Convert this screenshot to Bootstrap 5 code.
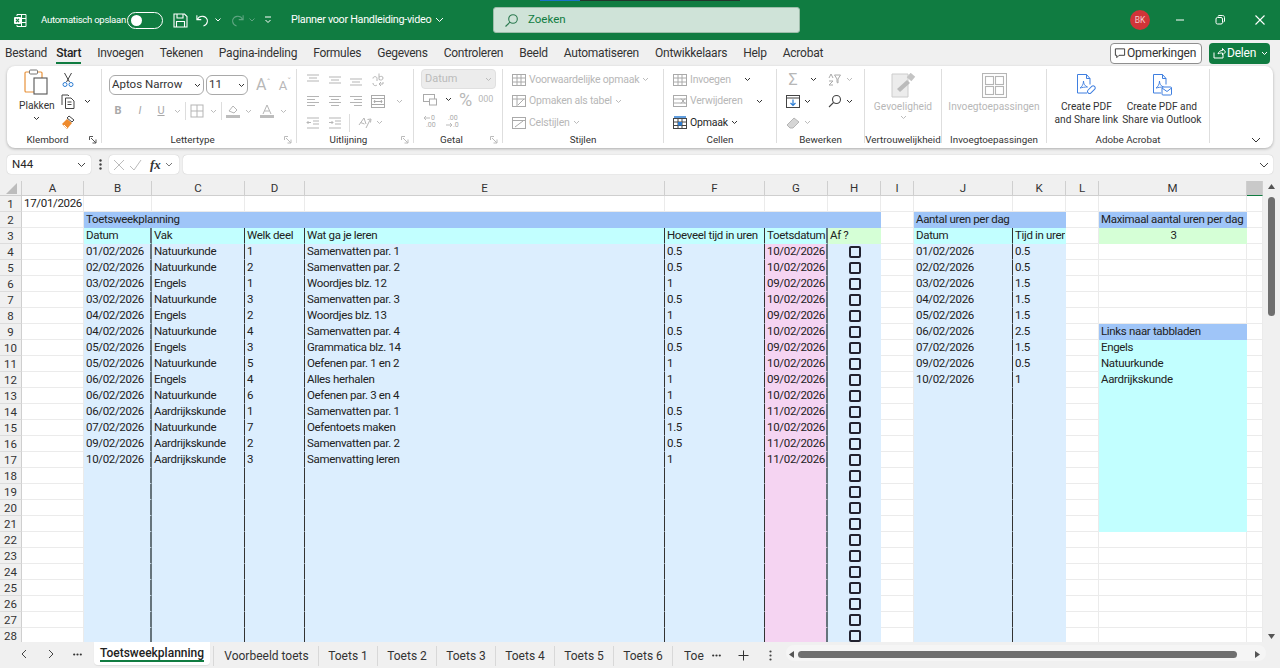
<!DOCTYPE html>
<html lang="nl"><head><meta charset="utf-8"><title>Planner voor Handleiding-video - Excel</title>
<link href="https://cdn.jsdelivr.net/npm/bootstrap@5.3.0/dist/css/bootstrap.min.css" rel="stylesheet">
<style>
:root{--xg:#107c41;--dis:#bdbdbd;--ink:#333;--rib:"Roboto","Open Sans",sans-serif}
html,body{height:668px;overflow:hidden}
body{background:#f0f0f0;font-family:var(--rib);color:#262626}
.app{width:1280px;height:668px}
svg{display:block;flex:none}
.titlebar{height:40px;background:var(--xg);color:#fff;font-size:11px;position:relative}
.topline{position:absolute;left:540px;top:0;width:200px;height:1px;background:linear-gradient(90deg,#1a73c8 20%,#24342c 20%)}
.xlogo{margin-left:13px;margin-right:14px}
.autolbl{width:86px;font-size:9.6px;letter-spacing:-.3px;white-space:nowrap}
.tog{width:36px;height:17px;border:1.3px solid #fff;border-radius:9px;padding:2px 3px;margin-right:10px}
.tog i{display:block;width:11px;height:11px;border-radius:50%;background:#fff}
.qat{width:102px}
.doc{width:202px;font-size:10.8px;letter-spacing:-.3px;white-space:nowrap}
.search{width:307px;height:26px;background:#cfe3d8;border:1px solid #9dbdaa;border-radius:3px;color:#107c41;font-size:11.5px;padding-left:10px;gap:9px}
.avatar{width:20px;height:20px;border-radius:50%;background:#d13438;font-size:8.5px;margin-left:330px;color:#f6c9cb}
.wins{gap:24px;margin-left:22px}
.menubar{height:26px;padding:0 10px 0 5px;position:relative}
.mitem{font-size:12px;letter-spacing:-.25px;color:#333;margin-right:16px;line-height:26px;white-space:nowrap;position:relative}
.mitem.first{margin-right:9px}
.mitem.on{font-weight:500;color:#222}
.mitem.on::after{content:"";position:absolute;left:0;right:0;bottom:2px;height:2px;background:var(--xg)}
.btn-comment{width:92px;height:21px;border:1px solid #8f8f8f;border-radius:4px;background:#fff;font-size:12px;letter-spacing:-.2px;gap:1px;padding:0 0 0 3px;color:#333}
.btn-share{width:61px;height:21px;border-radius:4px;background:var(--xg);color:#fff;font-size:12px;letter-spacing:-.2px;margin-left:7px;gap:1px;padding:0 0 0 4px}
.ribbon{margin:0 7px;height:82px;background:#fff;border-radius:8px;box-shadow:0 1px 3px rgba(0,0,0,.28);padding:3px 0 5px}
.grp{height:100%;border-right:1px solid #dedede;flex:none;position:relative}
.grplbl{position:absolute;left:0;right:0;bottom:-3px;text-align:center;font-size:9.8px;color:#333;line-height:12px}
.grplbl.kl{right:13px}
.launch{position:absolute;right:4px;bottom:-1px}
.w1{width:95px}.w2{width:195px}.w3{width:117px}.w4{width:89px}.w5{width:161px}.w6{width:113px}.w7{width:88px}.w8{width:77px}.w9{width:105px}.w10{width:163px}
.bigcol{font-size:10.2px;text-align:center;line-height:13px;color:#333}
.dimt{color:#b7b7b7}
.rrow{height:21.5px}
.ib{width:21.5px;flex:none}
.bx{display:flex;justify-content:center;align-items:center;flex:none}
.b4{width:4px}.b10{width:10px}.b12{width:12px}.b14{width:14px}.b16{width:16px}.b18{width:18px}.b20{width:20px}.b22{width:22px}.b24{width:24px}.b27{width:27px}.b30{width:30px}
.vsep{width:1px;height:18px;background:#ddd}
.fsel{height:20px;border:1px solid #a9a9a9;border-radius:6px;font-size:11.5px;padding:0 2px;color:#333}
.fsel.a{width:95px}.fsel.b{width:42px;margin-left:2px}
.fontrow{padding-left:7px;margin-top:6px}
.fmtrow{padding-left:5px;margin-top:7px;font-size:11px;color:#a8a8a8}
.bigA{font-size:16px;line-height:1}.smA{font-size:13px;line-height:1}
.supa{font-size:9px;top:-.5em}
.numsel{width:75px;height:20px;background:#ececec;border:1px solid #e0e0e0;border-radius:4px;font-size:11px;color:#bbb;padding:0 3px;margin:0 0 0 7px}
.stl{font-size:10.5px;letter-spacing:-.22px;white-space:nowrap;gap:3px;height:21.5px}
.stack{padding-left:9px}
.ps9{padding-left:9px}
.col2{margin-left:6px}
.cw1{width:51px}.cw2{width:63px}
.pctbig{font-size:18px;line-height:1;margin-left:7px}
.pct{font-size:9px;margin-left:6px}
.tinynum{font-size:7px;fill:#aaa;font-family:"Roboto",sans-serif}
.gv{margin-top:2px}
.getrow{padding-left:9px}
.fbar{height:33px;padding:7px}
.fbx{height:19px;background:#fff;border-radius:4px;box-shadow:0 0 1px rgba(0,0,0,.3);font-size:11.5px}
.namebox{width:84px;padding:0 5px}
.vdots{width:18px}
.fxbox{width:70px;padding:0 3px 0 4px}
.fxinp{margin-left:4px;flex:1;padding-right:2px}
.fx{font-family:"Liberation Serif",serif;font-style:italic;font-weight:700;font-size:13px;color:#333}
.sheetwrap{height:461px;position:relative;background:#fff}
.gridbox{width:1263px;height:461px;overflow:hidden}
.sheet{table-layout:fixed;width:1263px;border-collapse:separate;border-spacing:0;font-family:"Roboto",sans-serif;font-size:11.5px;letter-spacing:-.33px;color:#222}
.sheet th{height:15px;background:#f0f0f0;text-align:center;font-weight:400;font-size:11.5px;letter-spacing:0;line-height:14px;border-right:1px solid #cfcfcf;border-bottom:1px solid #cfcfcf;padding:0;color:#333}
.sheet th.rh{background:#f0f0f0;border-right:1px solid #cfcfcf;border-bottom:1px solid #dcdcdc;height:16px}
.sheet td{height:16px;padding:0 0 0 2px;line-height:15px;white-space:nowrap;overflow:hidden;border-right:1px solid #ebebeb;border-bottom:1px solid #ebebeb}
.sheet .corner{background:#f0f0f0}
.sheet th.sel{background:#c9c9c9;border-bottom:1px solid var(--xg)}
.fb{background:#dceefe!important;border-right-color:#dceefe!important;border-bottom-color:#dceefe!important}
.fp{background:#f5d4f2!important;border-right-color:#f5d4f2!important;border-bottom-color:#f5d4f2!important}
.fh{background:#9fc5f8!important;border-right-color:#9fc5f8!important;border-bottom-color:#9fc5f8!important}
.fc{background:#c2ffff!important;border-right-color:#c2ffff!important;border-bottom-color:#c2ffff!important}
.fg{background:#d5ffd6!important;border-right-color:#d5ffd6!important;border-bottom-color:#d5ffd6!important}
.l1{border-right:1px solid #333!important}
.l2{border-right:2px solid #66747c!important}
.sheet td.ra{text-align:right;padding-right:1px}.ca{text-align:center}
.cbx{display:block;width:12px;height:12px;border:2px solid #222230;border-radius:2px;margin:0 auto}
.vscroll{width:17px;height:461px;background:#f0f0f0;position:absolute;right:0;top:0}
.vthumb{position:absolute;left:5px;top:16px;width:7px;height:119px;background:#6f6f6f;border-radius:4px}
.varr{position:absolute;left:4px;top:2px}
.varr.dn{top:452px}
.tabsbar{height:26px;font-size:12px;color:#333}
.tnav{width:94px;height:24px;padding-left:20px}
.nxt{margin-left:19px}.nxt2{margin-left:18px}
.tabx{white-space:nowrap;border-right:1px solid #d8d8d8;height:20px;margin-top:4px;line-height:20px;text-align:center;flex:none}
.tabx.act{width:116px;height:23px;margin-top:0;background:#fff;border-radius:0 0 4px 4px;font-weight:500;border:0;line-height:22px;position:relative;margin-right:3px;color:#222;box-shadow:0 1px 1px rgba(0,0,0,.08)}
.tabx.act::after{content:"";position:absolute;left:6px;right:6px;bottom:3px;height:2px;background:var(--xg)}
.t-v{width:106px;border-left:1px solid #d8d8d8;padding-left:1px}.t-n{width:59px}
.t-c{width:20px;overflow:hidden;border:0;margin-left:11px;text-align:left;margin-right:0}
.tctl{height:24px;margin-top:1px}
.hscroll{margin-left:4px;margin-top:3px;width:480px;height:16px;background:#f5f5f5;border-radius:8px;position:relative;flex:none}
.hthumb{position:absolute;left:12px;top:6px;width:439px;height:7px;background:#6f6f6f;border-radius:4px}
.harr{position:absolute;top:5px}
.harr.l{left:2px}.harr.r{left:468px}
</style></head><body>
<div class="app d-flex flex-column">
 <div class="titlebar d-flex align-items-center">
  <i class="topline"></i>
  <svg class="xlogo" width="14" height="15" viewBox="0 0 14 15" fill="none" stroke="#fff" stroke-width="1"><path d="M4 3V1.500h9V13.500H4V12"/><path d="M8.500 1.500v12M4 5.500h9M8.500 9.500H13"/><rect x="1" y="4" width="7" height="7" rx="1" fill="#fff" stroke="none"/><path d="M3 5.800l3 3.400M6 5.800l-3 3.400" stroke="#107c41" stroke-width="1.200"/></svg>
  <span class="autolbl">Automatisch opslaan</span>
  <span class="tog"><i></i></span>
  <div class="qat d-flex align-items-center me-3">
   <svg width="15" height="15" viewBox="0 0 15 15" fill="none" stroke="#fff" stroke-width="1.100"><path d="M1 1h10.500L14 3.500V14H1z"/><path d="M4 1v4h6V1M3.500 14V8.500h8V14"/></svg>
   <svg class="ms-2" width="14" height="15" viewBox="0 0 16 15" fill="none" stroke="#fff" stroke-width="1.200"><path d="M1 1.500V6.500H6"/><path d="M1.300 6.300C3 3.500 5.500 2.500 8 2.800c3 .4 5.500 2.800 5 6-.4 2.500-2 4.200-4.500 5"/></svg>
   <svg class="ms-1" width="8" height="6" viewBox="0 0 8 6" fill="none" stroke="#fff"><path d="M1.500 1.500 4 4l2.500-2.500"/></svg>
   <svg class="ms-2" width="14" height="15" viewBox="0 0 16 15" fill="none" stroke="#5fa582" stroke-width="1.200"><path d="M15 1.500V6.500H10"/><path d="M14.700 6.300C13 3.500 10.500 2.500 8 2.800c-3 .4-5.500 2.800-5 6 .4 2.500 2 4.200 4.500 5"/></svg>
   <svg class="ms-1" width="8" height="6" viewBox="0 0 8 6" fill="none" stroke="#5fa582"><path d="M1.500 1.500 4 4l2.500-2.500"/></svg>
   <svg class="ms-2" width="8" height="8" viewBox="0 0 8 8" fill="none" stroke="#fff"><path d="M1 1h6M1.500 4 4 6.500 6.500 4"/></svg>
  </div>
  <div class="doc d-flex align-items-center gap-1">Planner voor Handleiding-video <svg width="9" height="6" viewBox="0 0 9 6" fill="none" stroke="#fff"><path d="M1 1l3.500 3.500L8 1"/></svg></div>
  <div class="search d-flex align-items-center">
   <svg width="15" height="15" viewBox="0 0 15 15" fill="none" stroke="#2c7a50" stroke-width="1.100"><circle cx="9" cy="6" r="4.300"/><path d="M6 9.200 1.500 13.500"/></svg>Zoeken</div>
  <div class="avatar d-flex align-items-center justify-content-center">BK</div>
  <div class="wins d-flex align-items-center">
   <svg width="16" height="16" viewBox="0 0 16 16" stroke="#fff" fill="none"><path d="M4 8h8"/></svg>
   <svg width="16" height="16" viewBox="0 0 16 16" stroke="#fff" fill="none"><rect x="4" y="5.500" width="6.500" height="6.500" rx="1.500"/><path d="M6 4.500c0-.6.400-1 1-1h3.500c1.200 0 2 .8 2 2V9c0 .6-.4 1-1 1"/></svg>
   <svg width="16" height="16" viewBox="0 0 16 16" stroke="#fff" fill="none" stroke-width="1.100"><path d="M3.500 3.500l9 9M12.500 3.500l-9 9"/></svg>
  </div>
 </div>

 <div class="menubar d-flex align-items-center">
  <span class="mitem first">Bestand</span><span class="mitem on">Start</span><span class="mitem">Invoegen</span><span class="mitem">Tekenen</span><span class="mitem">Pagina-indeling</span><span class="mitem">Formules</span><span class="mitem">Gegevens</span><span class="mitem">Controleren</span><span class="mitem">Beeld</span><span class="mitem">Automatiseren</span><span class="mitem">Ontwikkelaars</span><span class="mitem">Help</span><span class="mitem">Acrobat</span>
  <div class="ms-auto d-flex">
   <div class="btn-comment d-flex align-items-center"><svg width="12" height="12" viewBox="0 0 13 12" fill="none" stroke="#333"><path d="M1.500 1.500h10v7H5.500L3 11V8.500H1.500z"/></svg>Opmerkingen</div>
   <div class="btn-share d-flex align-items-center"><svg width="13" height="12" viewBox="0 0 13 12" fill="none" stroke="#fff"><path d="M1 5.500V11h9V8M5 7c.5-2.500 2.500-3.500 4.500-3.500V1.500L12.500 5 9.500 8V6C7.500 6 6 6 5 7z"/></svg>Delen<svg class="ms-1" width="7" height="5" viewBox="0 0 7 5" fill="none" stroke="#fff"><path d="M1 1l2.500 2.500L6 1"/></svg></div>
  </div>
 </div>

 <div class="ribbon d-flex">
  <!-- Klembord -->
  <div class="grp w1 d-flex">
   <div class="bigcol d-flex flex-column align-items-center ps-2 ms-1">
    <svg width="25" height="26" viewBox="0 0 25 26" fill="none"><rect x="1" y="3" width="17" height="20" rx="1" stroke="#e8923a" stroke-width="1.200"/><rect x="5.500" y="1" width="8" height="4" rx="1" stroke="#777" fill="#fff"/><rect x="10" y="9" width="13" height="16" fill="#fff" stroke="#555" stroke-width="1.100"/></svg>
    <span class="mt-1">Plakken</span>
    <svg class="mt-1" width="7" height="5" viewBox="0 0 7 5" fill="none" stroke="#333"><path d="M1 1l2.500 2.500L6 1"/></svg>
   </div>
   <div class="d-flex flex-column col2">
    <div class="rrow d-flex align-items-center"><svg width="14" height="16" viewBox="0 0 14 16" fill="none" stroke="#444"><path d="M3.500 1 8.500 10M10.500 1 5.500 10"/><circle cx="4" cy="12.500" r="2" stroke="#2b7cd3"/><circle cx="10" cy="12.500" r="2" stroke="#2b7cd3"/></svg></div>
    <div class="rrow d-flex align-items-center"><svg width="15" height="15" viewBox="0 0 15 15" fill="none" stroke="#444"><path d="M1 11V1h6l1 1"/><path d="M4.500 4h5.500l3 3v7.500H4.500zM6.500 8h4M6.500 10.500h4"/></svg><svg class="ms-2" width="7" height="5" viewBox="0 0 7 5" fill="none" stroke="#333"><path d="M1 1l2.500 2.500L6 1"/></svg></div>
    <div class="rrow d-flex align-items-center"><svg width="15" height="15" viewBox="0 0 15 15" fill="none"><path d="M8 1l5 4-2 2-5-4z" fill="#fff" stroke="#444"/><path d="M6 4 1 9l5 5 5-6z" fill="#ef8a2c"/><path d="M3 10l3 3" stroke="#fff"/></svg></div>
   </div>
   <span class="grplbl kl">Klembord</span>
   <svg class="launch" width="8" height="8" viewBox="0 0 8 8" fill="none" stroke="#555"><path d="M.5 4V.5H4M2 2l5 5M7 3.500V7H3.500"/></svg>
  </div>
  <!-- Lettertype -->
  <div class="grp w2">
   <div class="d-flex align-items-center fontrow">
    <div class="fsel a d-flex align-items-center justify-content-between">Aptos Narrow<svg width="7" height="5" viewBox="0 0 7 5" fill="none" stroke="#333"><path d="M1 1l2.500 2.500L6 1"/></svg></div>
    <div class="fsel b d-flex align-items-center justify-content-between">11<svg width="7" height="5" viewBox="0 0 7 5" fill="none" stroke="#333"><path d="M1 1l2.500 2.500L6 1"/></svg></div>
    <span class="ms-2 dimt bigA">A<sup class="supa">ˆ</sup></span>
    <span class="ms-2 dimt smA">A<sup class="supa">ˇ</sup></span>
   </div>
   <div class="d-flex align-items-center fmtrow">
    <b class="bx b22">B</b>
    <i class="bx b22">I</i>
    <u class="bx b20">U</u>
    <span class="bx b12"><svg width="7" height="5" viewBox="0 0 7 5" fill="none" stroke="#bbb"><path d="M1 1l2.500 2.500L6 1"/></svg></span>
    <span class="bx b4"><i class="vsep"></i></span>
    <span class="bx b20"><svg width="14" height="14" viewBox="0 0 14 14" fill="none" stroke="#b5b5b5"><rect x="1" y="1" width="12" height="12"/><path d="M7 1v12M1 7h12"/></svg></span>
    <span class="bx b12"><svg width="7" height="5" viewBox="0 0 7 5" fill="none" stroke="#bbb"><path d="M1 1l2.500 2.500L6 1"/></svg></span>
    <span class="bx b4"><i class="vsep"></i></span>
    <span class="bx b20"><svg width="14" height="14" viewBox="0 0 14 14" fill="none" stroke="#b5b5b5"><path d="M3 7l4-5 4 4-3 3z"/><rect x="0" y="11" width="14" height="3" fill="#bdbdbd" stroke="none"/></svg></span>
    <span class="bx b10"><svg width="7" height="5" viewBox="0 0 7 5" fill="none" stroke="#bbb"><path d="M1 1l2.500 2.500L6 1"/></svg></span>
    <span class="bx b27"><svg width="14" height="14" viewBox="0 0 14 14" fill="none" stroke="#b5b5b5"><path d="M3 10 7 1l4 9M4.500 7h5"/><rect x="0" y="11" width="14" height="3" fill="#bdbdbd" stroke="none"/></svg></span>
    <svg width="7" height="5" viewBox="0 0 7 5" fill="none" stroke="#bbb"><path d="M1 1l2.500 2.500L6 1"/></svg>
   </div>
   <span class="grplbl kl">Lettertype</span>
   <svg class="launch" width="8" height="8" viewBox="0 0 8 8" fill="none" stroke="#bbb"><path d="M.5 4V.5H4M2 2l5 5M7 3.500V7H3.500"/></svg>
  </div>
  <!-- Uitlijning -->
  <div class="grp w3 stack"><span class="grplbl kl">Uitlijning</span>
   <svg class="launch" width="8" height="8" viewBox="0 0 8 8" fill="none" stroke="#bbb"><path d="M.5 4V.5H4M2 2l5 5M7 3.500V7H3.500"/></svg>
   <div class="rrow d-flex align-items-center">
    <div class="ib"><svg width="14" height="12" viewBox="0 0 14 12" stroke="#b5b5b5"><path d="M1 1h12M3 4h8M1 7h12"/></svg></div>
    <div class="ib"><svg width="14" height="12" viewBox="0 0 14 12" stroke="#b5b5b5"><path d="M1 3h12M3 6h8M1 9h12"/></svg></div>
    <div class="ib"><svg width="14" height="12" viewBox="0 0 14 12" stroke="#b5b5b5"><path d="M1 5h12M3 8h8M1 11h12"/></svg></div>
    <div class="ib"><svg width="14" height="14" viewBox="0 0 14 14" fill="none" stroke="#b5b5b5"><path d="M2 5.500C2 3 6 3 6 5.500V8M8 .5v6c2 1 4 .5 4-1.500S10 3 8 4M2 10c0 3 3 3 4 2M8 11h4v-2M10 13l-2-2 2-2"/></svg></div>
   </div>
   <div class="rrow d-flex align-items-center">
    <div class="ib"><svg width="14" height="12" viewBox="0 0 14 12" stroke="#b5b5b5"><path d="M1 1.500h12M1 4.500h8M1 7.500h12M1 10.500h8"/></svg></div>
    <div class="ib"><svg width="14" height="12" viewBox="0 0 14 12" stroke="#b5b5b5"><path d="M1 1.500h12M3 4.500h8M1 7.500h12M3 10.500h8"/></svg></div>
    <div class="ib"><svg width="14" height="12" viewBox="0 0 14 12" stroke="#b5b5b5"><path d="M1 1.500h12M5 4.500h8M1 7.500h12M5 10.500h8"/></svg></div>
    <div class="ib"><svg width="14" height="13" viewBox="0 0 14 13" fill="none" stroke="#aaa"><rect x=".5" y=".5" width="13" height="12"/><path d="M.5 3.500h13M.5 9.500h13M3 6.500h8M4 5l-1 1.500L4 8M10 5l1 1.500L10 8"/></svg></div>
    <svg class="ms-1" width="7" height="5" viewBox="0 0 7 5" fill="none" stroke="#bbb"><path d="M1 1l2.500 2.500L6 1"/></svg>
   </div>
   <div class="rrow d-flex align-items-center">
    <div class="ib"><svg width="14" height="12" viewBox="0 0 14 12" fill="none" stroke="#b5b5b5"><path d="M1 1h12M7 4h6M7 7h6M1 11h12M5 5.500H1M2.500 4 1 5.500 2.500 7"/></svg></div>
    <div class="ib"><svg width="14" height="12" viewBox="0 0 14 12" fill="none" stroke="#b5b5b5"><path d="M1 1h12M7 4h6M7 7h6M1 11h12M1 5.500h4M3.500 4 5 5.500 3.500 7"/></svg></div>
    <i class="vsep me-2"></i>
    <svg width="14" height="14" viewBox="0 0 14 14" fill="none" stroke="#b5b5b5"><path d="M1 9 6 2l2 6M2.500 6.500l4 1.500M8 12l4-8M9.500 3.500 13 3l-.5 3.500"/></svg>
    <svg class="ms-1" width="7" height="5" viewBox="0 0 7 5" fill="none" stroke="#bbb"><path d="M1 1l2.500 2.500L6 1"/></svg>
   </div>
  </div>
  <!-- Getal -->
  <div class="grp w4"><span class="grplbl kl">Getal</span>
   <svg class="launch" width="8" height="8" viewBox="0 0 8 8" fill="none" stroke="#bbb"><path d="M.5 4V.5H4M2 2l5 5M7 3.500V7H3.500"/></svg>
   <div class="numsel d-flex align-items-center justify-content-between">Datum<svg width="7" height="5" viewBox="0 0 7 5" fill="none" stroke="#bbb"><path d="M1 1l2.500 2.500L6 1"/></svg></div>
   <div class="rrow d-flex align-items-center getrow">
    <svg width="14" height="12" viewBox="0 0 14 12" fill="none" stroke="#aaa"><rect x=".5" y=".5" width="11" height="7"/><rect x="6.500" y="5" width="7" height="6" fill="#fff"/></svg>
    <svg class="ms-2" width="7" height="5" viewBox="0 0 7 5" fill="none" stroke="#333"><path d="M1 1l2.500 2.500L6 1"/></svg>
    <span class="dimt pctbig">%</span>
    <span class="dimt pct">000</span>
   </div>
   <div class="rrow d-flex align-items-center getrow gap-2">
    <svg width="14" height="15" viewBox="0 0 14 15" fill="none" stroke="#bbb"><path d="M1 4h6M3 2 1 4l2 2"/><text class="tinynum" x="8" y="6" stroke="none">0</text><text class="tinynum" x="3" y="13" stroke="none">.00</text></svg>
    <svg width="14" height="15" viewBox="0 0 14 15" fill="none" stroke="#bbb"><path d="M1 11h6M5 9l2 2-2 2"/><text class="tinynum" x="3" y="6" stroke="none">.00</text><text class="tinynum" x="8" y="13" stroke="none">.0</text></svg>
   </div>
  </div>
  <!-- Stijlen -->
  <div class="grp w5 ps9"><span class="grplbl">Stijlen</span>
   <div class="stl d-flex align-items-center dimt"><svg width="14" height="12" viewBox="0 0 14 12" fill="none" stroke="#aaa"><rect x=".5" y=".5" width="13" height="11"/><path d="M.5 4h13M.5 8h13M5 .5v11M9 .5v11"/></svg>Voorwaardelijke opmaak<svg width="7" height="5" viewBox="0 0 7 5" fill="none" stroke="#bbb"><path d="M1 1l2.500 2.500L6 1"/></svg></div>
   <div class="stl d-flex align-items-center dimt"><svg width="14" height="12" viewBox="0 0 14 12" fill="none" stroke="#aaa"><rect x=".5" y=".5" width="13" height="11"/><path d="M.5 4h13M5 .5v11M6 10l6-6"/></svg>Opmaken als tabel<svg width="7" height="5" viewBox="0 0 7 5" fill="none" stroke="#bbb"><path d="M1 1l2.500 2.500L6 1"/></svg></div>
   <div class="stl d-flex align-items-center dimt"><svg width="14" height="12" viewBox="0 0 14 12" fill="none" stroke="#aaa"><rect x=".5" y=".5" width="13" height="11"/><path d="M.5 3.500h13M3 10l8-6"/></svg>Celstijlen<svg width="7" height="5" viewBox="0 0 7 5" fill="none" stroke="#bbb"><path d="M1 1l2.500 2.500L6 1"/></svg></div>
  </div>
  <!-- Cellen -->
  <div class="grp w6 ps9"><span class="grplbl">Cellen</span>
   <div class="stl d-flex align-items-center dimt"><svg width="14" height="12" viewBox="0 0 14 12" fill="none" stroke="#aaa"><rect x=".5" y=".5" width="13" height="11"/><path d="M.5 4h13M.5 8h13M5 .5v11M9 .5v11"/></svg><span class="cw1">Invoegen</span><svg width="7" height="5" viewBox="0 0 7 5" fill="none" stroke="#333"><path d="M1 1l2.500 2.500L6 1"/></svg></div>
   <div class="stl d-flex align-items-center dimt"><svg width="14" height="12" viewBox="0 0 14 12" fill="none" stroke="#aaa"><rect x=".5" y=".5" width="13" height="11"/><path d="M.5 4h13M.5 8h13M8 3.500l4 5M12 3.500l-4 5"/></svg><span class="cw2">Verwijderen</span><svg width="7" height="5" viewBox="0 0 7 5" fill="none" stroke="#333"><path d="M1 1l2.500 2.500L6 1"/></svg></div>
   <div class="stl d-flex align-items-center"><svg width="14" height="14" viewBox="0 0 14 14" fill="none" stroke="#444"><rect x=".5" y="2.500" width="13" height="10"/><path d="M.5 6h13M.5 9.500h13M5 2.500v10M9 2.500v10"/><path d="M1 1h12" stroke="#2b7cd3" stroke-width="1.500"/><rect x="5" y="6" width="4" height="3.500" fill="#2b7cd3" stroke="none"/></svg>Opmaak<svg width="7" height="5" viewBox="0 0 7 5" fill="none" stroke="#333"><path d="M1 1l2.500 2.500L6 1"/></svg></div>
  </div>
  <!-- Bewerken -->
  <div class="grp w7 ps-2"><span class="grplbl">Bewerken</span>
   <div class="rrow d-flex align-items-center">
    <span class="bx b16 dimt fs-6 lh-1">Σ</span>
    <span class="bx b24"><svg width="7" height="5" viewBox="0 0 7 5" fill="none" stroke="#333"><path d="M1 1l2.500 2.500L6 1"/></svg></span>
    <span class="bx b18"><svg width="13" height="13" viewBox="0 0 13 13" fill="none" stroke="#aaa"><path d="M1 5 3 1l2 4M1 8h4L1 12h4M6.500 2h6L10 6v4L9 9.500V6z"/></svg></span>
    <span class="bx b12"><svg width="7" height="5" viewBox="0 0 7 5" fill="none" stroke="#bbb"><path d="M1 1l2.500 2.500L6 1"/></svg></span>
   </div>
   <div class="rrow d-flex align-items-center">
    <span class="bx b16"><svg width="14" height="13" viewBox="0 0 14 13" fill="none" stroke="#444"><rect x=".5" y=".5" width="13" height="12"/><path d="M.5 3h13"/><path d="M7 4.500v6M4.500 8 7 10.500 9.500 8" stroke="#2b7cd3" stroke-width="1.200"/></svg></span>
    <span class="bx b12"><svg width="7" height="5" viewBox="0 0 7 5" fill="none" stroke="#333"><path d="M1 1l2.500 2.500L6 1"/></svg></span>
    <span class="bx b14"></span>
    <span class="bx b16"><svg width="14" height="14" viewBox="0 0 14 14" fill="none" stroke="#444" stroke-width="1.100"><circle cx="8.500" cy="5.500" r="4"/><path d="M5.500 8.500 1 13"/></svg></span>
    <span class="bx b12"><svg width="7" height="5" viewBox="0 0 7 5" fill="none" stroke="#333"><path d="M1 1l2.500 2.500L6 1"/></svg></span>
   </div>
   <div class="rrow d-flex align-items-center">
    <span class="bx b16"><svg width="14" height="12" viewBox="0 0 14 12" fill="#d5d5d5" stroke="#b5b5b5"><path d="M1 8l7-7 5 4-6 6H4z"/></svg></span>
    <span class="bx b12"><svg width="7" height="5" viewBox="0 0 7 5" fill="none" stroke="#bbb"><path d="M1 1l2.500 2.500L6 1"/></svg></span>
   </div>
  </div>
  <!-- Gevoeligheid -->
  <div class="grp w8 bigcol d-flex flex-column align-items-center">
   <svg class="mt-1" width="25" height="25" viewBox="0 0 25 25" fill="none"><path d="M1 1h16v23H1z" fill="#ececec" stroke="#ccc"/><path d="M6 16 16 7l3 3-10 9z" fill="#bbb"/><rect x="17" y="1" width="6" height="6" transform="rotate(40 20 4)" fill="#c4c4c4"/></svg>
   <span class="dimt gv">Gevoeligheid</span>
   <svg class="gv" width="7" height="5" viewBox="0 0 7 5" fill="none" stroke="#bbb"><path d="M1 1l2.500 2.500L6 1"/></svg>
   <span class="grplbl">Vertrouwelijkheid</span>
  </div>
  <!-- Invoegtoepassingen -->
  <div class="grp w9 bigcol d-flex flex-column align-items-center">
   <svg class="mt-1" width="25" height="25" viewBox="0 0 25 25" fill="none" stroke="#b5b5b5" stroke-width="1.100"><rect x=".5" y=".5" width="24" height="24"/><rect x="3.500" y="3.500" width="8" height="8"/><rect x="13.500" y="3.500" width="8" height="8"/><rect x="3.500" y="13.500" width="8" height="8"/><rect x="13.500" y="13.500" width="8" height="8"/></svg>
   <span class="dimt gv">Invoegtoepassingen</span>
   <span class="grplbl">Invoegtoepassingen</span>
  </div>
  <!-- Adobe -->
  <div class="grp w10 bigcol d-flex justify-content-center gap-1">
   <div class="d-flex flex-column align-items-center">
    <svg class="mt-1" width="20" height="25" viewBox="0 0 20 25" fill="none" stroke="#3f7fe0"><path d="M11 20H1.500V1.500h9l3.500 4v6M10.500 1.500v4h3.500"/><path d="M4 15c2-1 3.500-4 3.500-7 0 3 1.500 5 4 6-3 0-5 .5-7.500 1z" stroke-width=".9"/><rect x="11" y="15" width="9" height="4" rx="2" transform="rotate(-45 15 17)"/></svg>
    <span class="gv">Create PDF<br>and Share link</span>
   </div>
   <div class="d-flex flex-column align-items-center">
    <svg class="mt-1" width="20" height="25" viewBox="0 0 20 25" fill="none" stroke="#3f7fe0"><path d="M9 20H1.500V1.500h9l3.500 4v6M10.500 1.500v4h3.500"/><path d="M4 15c2-1 3.500-4 3.500-7 0 3 1.500 5 4 6-3 0-5 .5-7.500 1z" stroke-width=".9"/><rect x="10" y="14" width="9.500" height="8" rx="1" fill="#fff"/><path d="M10 15l5 3.500 4.500-3.500"/></svg>
    <span class="gv">Create PDF and<br>Share via Outlook</span>
   </div>
   <span class="grplbl">Adobe Acrobat</span>
  </div>
  <div class="flex-grow-1 d-flex align-items-end justify-content-end pe-2"><svg class="me-1" width="10" height="6" viewBox="0 0 10 6" fill="none" stroke="#333"><path d="M1 1l4 4 4-4"/></svg></div>
 </div>

 <div class="fbar d-flex align-items-center">
  <div class="fbx namebox d-flex align-items-center justify-content-between">N44<svg width="9" height="6" viewBox="0 0 9 6" fill="none" stroke="#444"><path d="M1 1l3.500 3.500L8 1"/></svg></div>
  <div class="bx vdots"><svg width="3" height="11" viewBox="0 0 3 11" fill="#444"><circle cx="1.500" cy="1.500" r="1.200"/><circle cx="1.500" cy="5.500" r="1.200"/><circle cx="1.500" cy="9.500" r="1.200"/></svg></div>
  <div class="fxbox fbx d-flex align-items-center gap-1"><svg width="12" height="12" viewBox="0 0 12 12" stroke="#bbb" fill="none"><path d="M1 1l10 10M11 1 1 11"/></svg><svg width="13" height="12" viewBox="0 0 13 12" stroke="#bbb" fill="none"><path d="M1 7l4 4 7-10"/></svg><span class="fx ms-1">fx</span><svg width="8" height="5" viewBox="0 0 8 5" stroke="#777" fill="none"><path d="M1 1l3 3 3-3"/></svg></div>
  <div class="fxinp fbx d-flex align-items-center justify-content-end pe-1"><svg width="10" height="6" viewBox="0 0 10 6" fill="none" stroke="#444"><path d="M1 1l4 4 4-4"/></svg></div>
 </div>

 <div class="sheetwrap">
  <div class="gridbox"><table class="sheet" id="sheet"></table></div>
  <div class="vscroll">
   <svg class="varr" width="9" height="7" viewBox="0 0 9 7" fill="#555"><path d="M4.500 1 8 6H1z"/></svg>
   <div class="vthumb"></div>
   <svg class="varr dn" width="9" height="7" viewBox="0 0 9 7" fill="#555"><path d="M4.500 6 8 1H1z"/></svg>
  </div>
 </div>

 <div class="tabsbar d-flex align-items-start">
  <div class="tnav d-flex align-items-center">
   <svg width="8" height="12" viewBox="0 0 8 12" fill="none" stroke="#444"><path d="M6 2 2 6l4 4"/></svg>
   <svg class="nxt" width="8" height="12" viewBox="0 0 8 12" fill="none" stroke="#444"><path d="M2 2l4 4-4 4"/></svg>
   <svg class="nxt2" width="9" height="3" viewBox="0 0 9 3" fill="#333"><circle cx="1.200" cy="1.500" r="1.100"/><circle cx="4.500" cy="1.500" r="1.100"/><circle cx="7.800" cy="1.500" r="1.100"/></svg>
  </div>
  <div class="tabx act">Toetsweekplanning</div>
  <div class="tabx t-v">Voorbeeld toets</div>
  <div class="tabx t-n">Toets 1</div><div class="tabx t-n">Toets 2</div><div class="tabx t-n">Toets 3</div><div class="tabx t-n">Toets 4</div><div class="tabx t-n">Toets 5</div><div class="tabx t-n">Toets 6</div>
  <div class="tabx t-c">Toe</div>
  <span class="bx b24 tctl"><svg width="9" height="3" viewBox="0 0 9 3" fill="#333"><circle cx="1.200" cy="1.500" r="1.100"/><circle cx="4.500" cy="1.500" r="1.100"/><circle cx="7.800" cy="1.500" r="1.100"/></svg></span>
  <span class="bx b30 tctl"><svg width="11" height="11" viewBox="0 0 11 11" stroke="#333" fill="none"><path d="M5.500 .5v10M.5 5.500h10"/></svg></span>
  <span class="bx b24 tctl"><svg width="3" height="11" viewBox="0 0 3 11" fill="#444"><circle cx="1.500" cy="1.500" r="1.100"/><circle cx="1.500" cy="5.500" r="1.100"/><circle cx="1.500" cy="9.500" r="1.100"/></svg></span>
  <div class="hscroll">
   <svg class="harr l" width="7" height="9" viewBox="0 0 7 9" fill="#555"><path d="M1 4.500 6 1v7z"/></svg>
   <div class="hthumb"></div>
   <svg class="harr r" width="7" height="9" viewBox="0 0 7 9" fill="#555"><path d="M6 4.500 1 1v7z"/></svg>
  </div>
 </div>
</div>
<script>
const rows={4:["01/02/2026","Natuurkunde","1","Samenvatten par. 1","0.5","10/02/2026"],5:["02/02/2026","Natuurkunde","2","Samenvatten par. 2","0.5","10/02/2026"],6:["03/02/2026","Engels","1","Woordjes blz. 12","1","09/02/2026"],7:["03/02/2026","Natuurkunde","3","Samenvatten par. 3","0.5","10/02/2026"],8:["04/02/2026","Engels","2","Woordjes blz. 13","1","09/02/2026"],9:["04/02/2026","Natuurkunde","4","Samenvatten par. 4","0.5","10/02/2026"],10:["05/02/2026","Engels","3","Grammatica blz. 14","0.5","09/02/2026"],11:["05/02/2026","Natuurkunde","5","Oefenen par. 1 en 2","1","10/02/2026"],12:["06/02/2026","Engels","4","Alles herhalen","1","09/02/2026"],13:["06/02/2026","Natuurkunde","6","Oefenen par. 3 en 4","1","10/02/2026"],14:["06/02/2026","Aardrijkskunde","1","Samenvatten par. 1","0.5","11/02/2026"],15:["07/02/2026","Natuurkunde","7","Oefentoets maken","1.5","10/02/2026"],16:["09/02/2026","Aardrijkskunde","2","Samenvatten par. 2","0.5","11/02/2026"],17:["10/02/2026","Aardrijkskunde","3","Samenvatting leren","1","11/02/2026"]};
const jk={4:["01/02/2026","0.5"],5:["02/02/2026","0.5"],6:["03/02/2026","1.5"],7:["04/02/2026","1.5"],8:["05/02/2026","1.5"],9:["06/02/2026","2.5"],10:["07/02/2026","1.5"],11:["09/02/2026","0.5"],12:["10/02/2026","1"]};
const links={9:"Links naar tabbladen",10:"Engels",11:"Natuurkunde",12:"Aardrijkskunde"};
const widths=[22,62,68,93,60,360,100,63,53,33,99,53,33,148,16];
let h='<colgroup>'+widths.map(w=>'<col style="width:'+w+'px">').join('')+'</colgroup><thead><tr><th class="corner"><svg class="ms-auto me-1" width="11" height="11" viewBox="0 0 11 11" fill="#bcbcbc"><path d="M11 0v11H0z"/></svg></th>'+"ABCDEFGHIJKLM".split("").map(c=>'<th>'+c+'</th>').join('')+'<th class="sel"></th></tr></thead><tbody>';
const c=(t,k)=>'<td'+(k?' class="'+k+'"':'')+'>'+(t||'')+'</td>';
for(let r=1;r<=28;r++){
 h+='<tr><th class="rh">'+r+'</th>';
 if(r==1){h+=c('17/01/2026','ra');for(let i=0;i<13;i++)h+=c('')}
 else if(r==2){h+=c('')+'<td colspan="7" class="fh">Toetsweekplanning</td>'+c('')+'<td colspan="2" class="fh">Aantal uren per dag</td>'+c('')+c('Maximaal aantal uren per dag','fh')+c('')}
 else if(r==3){h+=c('')+c('Datum','fc l2')+c('Vak','fc l1')+c('Welk deel','fc l1')+c('Wat ga je leren','fc l1')+c('Hoeveel tijd in uren','fc l1')+c('Toetsdatum','fc l2')+c('Af ?','fg')+c('')+c('Datum','fc l1')+c('Tijd in uren','fc')+c('')+c('3','fg ca')+c('')}
 else{const d=rows[r]||[];const j=jk[r]||[];
  h+=c('')+c(d[0],'fb l2')+c(d[1],'fb l1')+c(d[2],'fb l1')+c(d[3],'fb l1')+c(d[4],'fb l1')+c(d[5],'fp l2 ra')+c('<span class="cbx"></span>','fb')+c('')+c(j[0],'fb l1')+c(j[1],'fb')+c('');
  h+=c(links[r]||'',r==9?'fh':(r>=10&&r<=21?'fc':''))+c('')}
 h+='</tr>';
}
document.getElementById('sheet').innerHTML=h+'</tbody>';
</script>
</body></html>
